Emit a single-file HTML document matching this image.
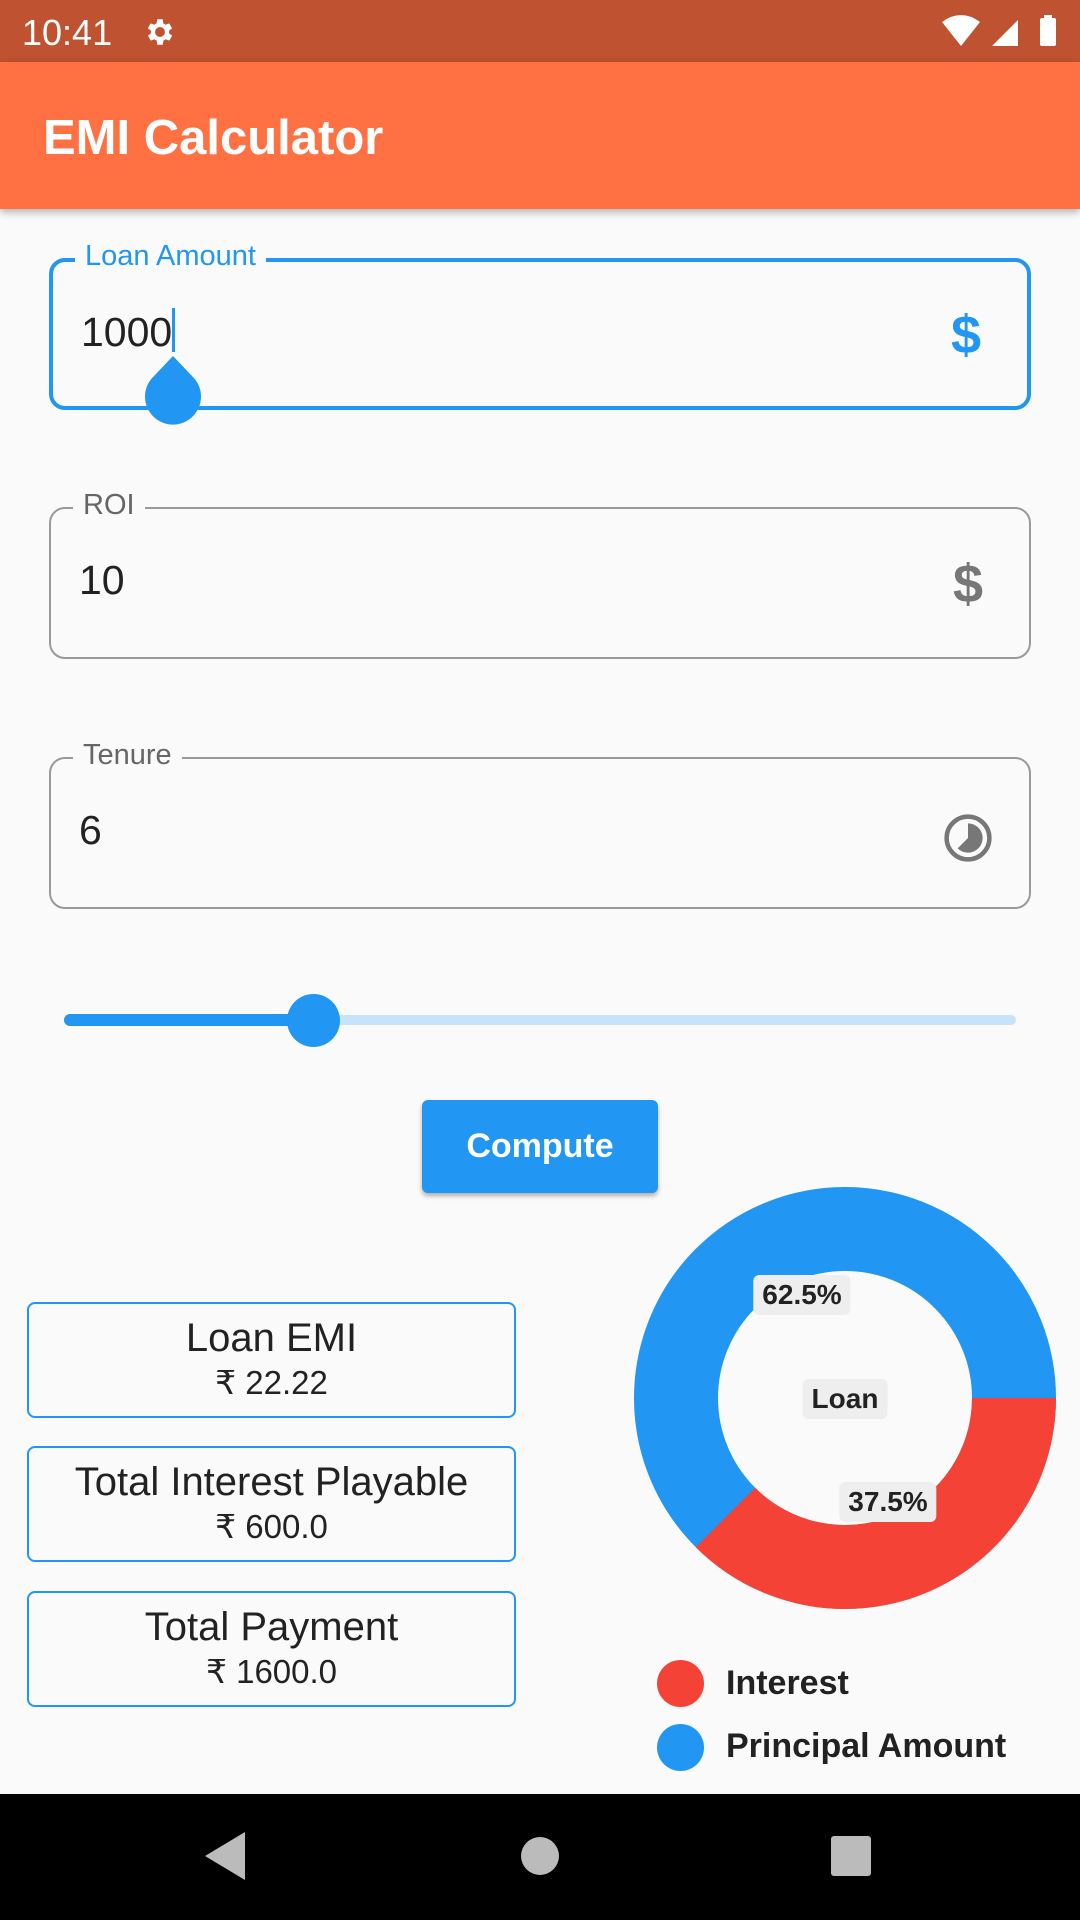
<!DOCTYPE html>
<html><head><meta charset="utf-8"><style>
*{margin:0;padding:0;box-sizing:border-box}
body{width:1080px;height:1920px;background:#fafafa;font-family:"Liberation Sans",sans-serif;position:relative;overflow:hidden;color:#222}
.abs{position:absolute}
.field{position:absolute;left:49px;width:982px;height:152px;border:2px solid #999;border-radius:16px}
.lbl{position:absolute;top:-20px;left:22px;padding:0 10px;background:#fafafa;font-size:29px;color:#666}
.val{position:absolute;left:28px;top:48px;font-size:41px;color:#222}
.box{position:absolute;left:27px;width:489px;height:116px;border:2px solid #2196F3;border-radius:8px;text-align:center}
.box .t{font-size:40px;margin-top:12px;color:#222}
.box .s{font-size:33px;margin-top:2px;color:#222}
.tag{position:absolute;background:#eee;border-radius:6px;font-weight:bold;font-size:28px;padding:4px 9px;transform:translate(-50%,-50%)}
.dol{position:absolute;right:46px;top:42px;font-size:54px;font-weight:bold}
</style></head><body>
<div class="abs" style="left:0;top:0;width:1080px;height:62px;background:#BF5331"></div>
<div class="abs" style="left:22px;top:12px;font-size:36px;color:#fff">10:41</div>
<svg class="abs" style="left:143px;top:15px" width="34" height="34" viewBox="0 0 24 24"><path fill="#fff" d="M19.4 13a7.5 7.5 0 000-2l2.1-1.6-2-3.5-2.5 1a7 7 0 00-1.7-1L15 3h-4l-.4 2.9a7 7 0 00-1.7 1l-2.5-1-2 3.5L6.6 11a7.5 7.5 0 000 2l-2.1 1.6 2 3.5 2.5-1a7 7 0 001.7 1L11 21h4l.4-2.9a7 7 0 001.7-1l2.5 1 2-3.5zM13 15.5a3.5 3.5 0 110-7 3.5 3.5 0 010 7z" transform="translate(-1 0)"/></svg>
<svg class="abs" style="left:940px;top:14px" width="120" height="34" viewBox="0 0 120 34"><path fill="#fff" d="M2 8q19-14 38 0L21 32z"/><path fill="#fff" d="M52 32L78 6v26z"/><rect x="100" y="4" width="16" height="28" rx="2" fill="#fff"/><rect x="104" y="1" width="8" height="4" fill="#fff"/></svg>
<div class="abs" style="left:0;top:62px;width:1080px;height:147px;background:#FF7043;box-shadow:0 3px 8px rgba(0,0,0,.3)"></div>
<div class="abs" style="left:43px;top:110px;font-size:49px;color:#fff;font-weight:bold">EMI Calculator</div>

<div class="field" style="top:258px;border:4px solid #2196F3"><div class="lbl" style="color:#2196F3;top:-22px">Loan Amount</div><div class="val" style="top:46px">1000<span style="display:inline-block;width:3px;height:44px;background:#2196F3;vertical-align:-6px"></span></div><div class="dol" style="color:#2196F3">$</div></div>
<svg class="abs" style="left:144px;top:354px" width="58" height="72" viewBox="0 0 58 72"><path fill="#2196F3" d="M29 2L10 22a28 28 0 1038 0z"/></svg>
<div class="field" style="top:507px"><div class="lbl">ROI</div><div class="val">10</div><div class="dol" style="color:#777;top:44px">$</div></div>
<div class="field" style="top:757px"><div class="lbl">Tenure</div><div class="val">6</div>
<svg class="abs" style="right:34px;top:52px" width="54" height="54" viewBox="0 0 24 24"><circle cx="12" cy="12" r="9.5" fill="none" stroke="#777" stroke-width="2"/><path fill="#777" d="M12 5.5a6.5 6.5 0 11-4.6 11.1L12 12z"/></svg></div>

<div class="abs" style="left:64px;top:1015px;width:952px;height:10px;background:#C5E3FB;border-radius:5px"></div>
<div class="abs" style="left:64px;top:1014px;width:250px;height:12px;background:#2196F3;border-radius:6px"></div>
<div class="abs" style="left:287px;top:994px;width:53px;height:53px;background:#2196F3;border-radius:50%"></div>

<div class="abs" style="left:422px;top:1100px;width:236px;height:93px;background:#2196F3;border-radius:6px;box-shadow:0 3px 5px rgba(0,0,0,.3);color:#fff;font-weight:bold;font-size:34px;text-align:center;line-height:93px">Compute</div>

<div class="box" style="top:1302px"><div class="t">Loan EMI</div><div class="s">₹ 22.22</div></div>
<div class="box" style="top:1446px"><div class="t">Total Interest Playable</div><div class="s">₹ 600.0</div></div>
<div class="box" style="top:1591px"><div class="t">Total Payment</div><div class="s">₹ 1600.0</div></div>

<svg class="abs" style="left:634px;top:1187px" width="422" height="422" viewBox="-211 -211 422 422">
<circle r="169" fill="none" stroke="#2196F3" stroke-width="84"/>
<path d="M211 0A211 211 0 0 1 -149.2 149.2L-89.8 89.8A127 127 0 0 0 127 0z" fill="#F44336"/>
</svg>
<div class="tag" style="left:802px;top:1295px">62.5%</div>
<div class="tag" style="left:845px;top:1399px">Loan</div>
<div class="tag" style="left:888px;top:1502px">37.5%</div>
<div class="abs" style="left:657px;top:1660px;width:47px;height:47px;border-radius:50%;background:#F44336"></div>
<div class="abs" style="left:726px;top:1664px;font-size:34px;font-weight:bold">Interest</div>
<div class="abs" style="left:657px;top:1724px;width:47px;height:47px;border-radius:50%;background:#2196F3"></div>
<div class="abs" style="left:726px;top:1727px;font-size:34px;font-weight:bold">Principal Amount</div>

<div class="abs" style="left:0;top:1794px;width:1080px;height:126px;background:#000"></div>
<svg class="abs" style="left:0;top:1794px" width="1080" height="126"><path d="M245 38v48l-40-24z" fill="#bbb"/><circle cx="540" cy="62" r="19" fill="#bbb"/><rect x="831" y="42" width="40" height="40" rx="3" fill="#bbb"/></svg>
</body></html>
